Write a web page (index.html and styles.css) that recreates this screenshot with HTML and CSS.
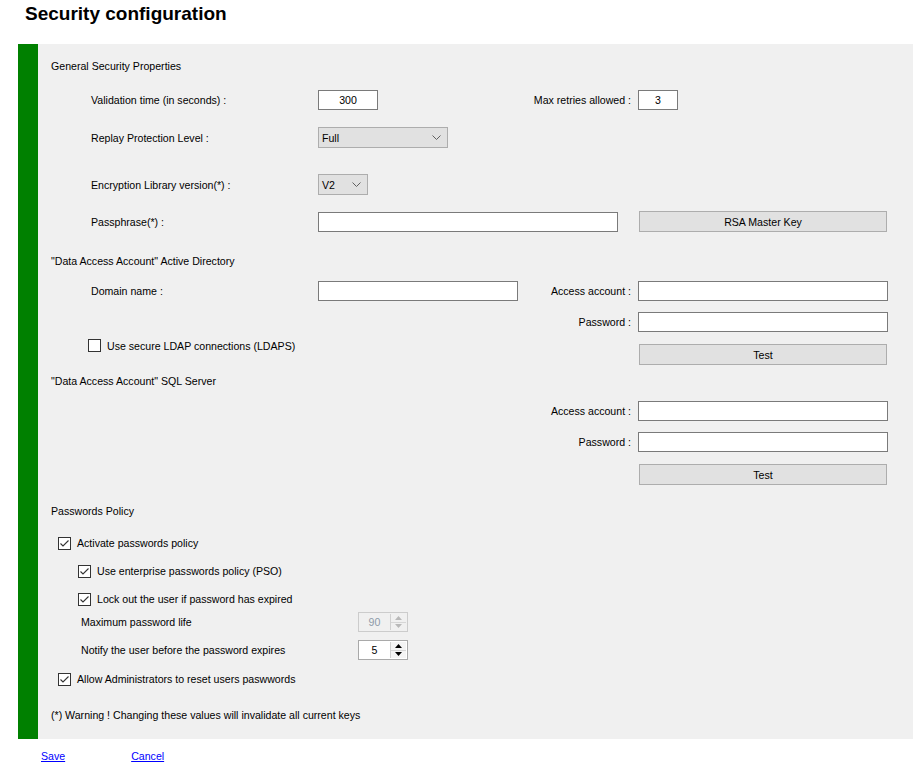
FILE: index.html
```html
<!DOCTYPE html>
<html lang="en">
<head>
<meta charset="utf-8">
<title>Security configuration</title>
<link rel="stylesheet" href="styles.css">
</head>
<body>
<h1 class="title">Security configuration</h1>
<div class="panel">
  <div class="section">General Security Properties</div>

  <div class="row r1">
    <span class="lbl">Validation time (in seconds) :</span>
    <input class="tb w60 center" value="300">
    <span class="rlbl">Max retries allowed :</span>
    <input class="tb w40 center right-field" value="3">
  </div>

  <div class="row r2 h21">
    <span class="lbl">Replay Protection Level :</span>
    <div class="combo w130"><span>Full</span><svg class="chev" width="9" height="5" viewBox="0 0 9 5"><polyline points="0.5,0.5 4.5,4.5 8.5,0.5" fill="none" stroke="#606060" stroke-width="1"/></svg></div>
  </div>

  <div class="row r3 h21">
    <span class="lbl">Encryption Library version(*) :</span>
    <div class="combo w50"><span>V2</span><svg class="chev" width="9" height="5" viewBox="0 0 9 5"><polyline points="0.5,0.5 4.5,4.5 8.5,0.5" fill="none" stroke="#606060" stroke-width="1"/></svg></div>
  </div>

  <div class="row r4 h21">
    <span class="lbl">Passphrase(*) :</span>
    <input class="tb w300 span2" value="">
    <button class="btn right-field">RSA Master Key</button>
  </div>

  <div class="section s2">"Data Access Account" Active Directory</div>

  <div class="row r5">
    <span class="lbl">Domain name :</span>
    <input class="tb w200" value="">
    <span class="rlbl">Access account :</span>
    <input class="tb w250 right-field" value="">
  </div>

  <div class="row r6">
    <span class="rlbl">Password :</span>
    <input class="tb w250 right-field" type="password" value="">
  </div>

  <div class="row r7">
    <label class="cb-item ldaps"><span class="cb"></span>Use secure LDAP connections (LDAPS)</label>
    <button class="btn right-field bottom">Test</button>
  </div>

  <div class="section s3">"Data Access Account" SQL Server</div>

  <div class="row r8">
    <span class="rlbl">Access account :</span>
    <input class="tb w250 right-field" value="">
  </div>

  <div class="row r9">
    <span class="rlbl">Password :</span>
    <input class="tb w250 right-field" type="password" value="">
  </div>

  <div class="row r10 h21">
    <button class="btn right-field">Test</button>
  </div>

  <div class="section s4">Passwords Policy</div>

  <div class="pol pol1 lvl1"><span class="cb checked"><svg width="11" height="11" viewBox="0 0 11 11"><polyline points="1.5,5.5 4,8 9.5,2.5" fill="none" stroke="#333" stroke-width="1.1"/></svg></span>Activate passwords policy</div>
  <div class="pol pol2 lvl2"><span class="cb checked"><svg width="11" height="11" viewBox="0 0 11 11"><polyline points="1.5,5.5 4,8 9.5,2.5" fill="none" stroke="#333" stroke-width="1.1"/></svg></span>Use enterprise passwords policy (PSO)</div>
  <div class="pol pol3 lvl2"><span class="cb checked"><svg width="11" height="11" viewBox="0 0 11 11"><polyline points="1.5,5.5 4,8 9.5,2.5" fill="none" stroke="#333" stroke-width="1.1"/></svg></span>Lock out the user if password has expired</div>

  <div class="pol spin-row sp1">
    <span class="spin-lbl">Maximum password life</span>
    <div class="spin disabled">
      <span class="spin-val">90</span>
      <span class="spin-btns">
        <span class="sb up"><svg width="7" height="4" viewBox="0 0 7 4"><polygon points="3.5,0 7,4 0,4" fill="#b8b8b8"/></svg></span>
        <span class="sb dn"><svg width="7" height="4" viewBox="0 0 7 4"><polygon points="0,0 7,0 3.5,4" fill="#b8b8b8"/></svg></span>
      </span>
    </div>
  </div>

  <div class="pol spin-row sp2">
    <span class="spin-lbl">Notify the user before the password expires</span>
    <div class="spin">
      <span class="spin-val">5</span>
      <span class="spin-btns">
        <span class="sb up"><svg width="7" height="4" viewBox="0 0 7 4"><polygon points="3.5,0 7,4 0,4" fill="#000"/></svg></span>
        <span class="sb dn"><svg width="7" height="4" viewBox="0 0 7 4"><polygon points="0,0 7,0 3.5,4" fill="#000"/></svg></span>
      </span>
    </div>
  </div>

  <div class="pol pol4 lvl1"><span class="cb checked"><svg width="11" height="11" viewBox="0 0 11 11"><polyline points="1.5,5.5 4,8 9.5,2.5" fill="none" stroke="#333" stroke-width="1.1"/></svg></span>Allow Administrators to reset users paswwords</div>

  <div class="section warn">(*) Warning ! Changing these values will invalidate all current keys</div>
</div>

<div class="links">
  <a href="#" class="link">Save</a>
  <a href="#" class="link cancel">Cancel</a>
</div>
</body>
</html>
```

FILE: styles.css
```css
html, body {
  margin: 0;
  padding: 0;
  background: #ffffff;
}

body {
  font-family: "Liberation Sans", Arial, sans-serif;
  font-size: 10.6px;
  color: #000;
}

.title {
  margin: 0 0 16px 25px;
  font-size: 19px;
  font-weight: bold;
  line-height: 28px;
  height: 28px;
  color: #000;
}

.panel {
  margin-left: 18px;
  border-left: 20px solid #008000;
  background: #f0f0f0;
  padding: 12px 0 14px 0;
}

.section {
  height: 20px;
  line-height: 20px;
  padding-left: 13px;
  white-space: nowrap;
}

.s2 { margin-top: 19px; }
.s3 { margin-top: 6px; }
.s4 { margin-top: 16px; }
.warn { margin-top: 16px; }

.row {
  display: grid;
  grid-template-columns: 227px 200px 113px 7px 250px;
  padding-left: 53px;
  height: 20px;
  align-items: center;
}

.row.h21 { height: 21px; }

.r1 { margin-top: 14px; }
.r2 { margin-top: 17px; }
.r3 { margin-top: 26px; }
.r4 { margin-top: 16px; }
.r5 { margin-top: 10px; }
.r6 { margin-top: 11px; }
.r7 { margin-top: 7px; height: 26px; align-items: start; }
.r8 { margin-top: 10px; }
.r9 { margin-top: 11px; }
.r10 { margin-top: 12px; }

.lbl {
  grid-column: 1;
  white-space: nowrap;
}

.rlbl {
  grid-column: 3;
  justify-self: end;
  white-space: nowrap;
}

.right-field {
  grid-column: 5;
}

.span2 {
  grid-column: 2 / 5;
}

.tb {
  box-sizing: border-box;
  height: 20px;
  border: 1px solid #7a7a7a;
  background: #fff;
  font: inherit;
  color: #000;
  padding: 0 3px;
  margin: 0;
  outline: none;
  justify-self: start;
}

.center { text-align: center; }

.w40 { width: 40px; }
.w50 { width: 50px; }
.w60 { width: 60px; }
.w130 { width: 130px; }
.w200 { width: 200px; }
.w250 { width: 250px; }
.w300 { width: 300px; }

.combo {
  box-sizing: border-box;
  height: 21px;
  border: 1px solid #adadad;
  background: #e1e1e1;
  display: flex;
  align-items: center;
  justify-content: space-between;
  padding: 0 6px 0 3px;
  justify-self: start;
}

.chev { display: block; }

.btn {
  box-sizing: border-box;
  width: 248px;
  height: 21px;
  margin: 0 0 0 1px;
  padding: 0;
  border: 1px solid #adadad;
  background: #e1e1e1;
  font: inherit;
  color: #000;
  justify-self: start;
}

.btn.bottom { align-self: end; }

.cb-item {
  grid-column: 1 / 3;
  display: flex;
  align-items: center;
  margin-left: -3px;
  height: 13px;
  white-space: nowrap;
}

.cb {
  box-sizing: border-box;
  width: 13px;
  height: 13px;
  border: 1px solid #333;
  background: #fff;
  margin-right: 6px;
  flex: none;
  display: flex;
  align-items: center;
  justify-content: center;
}

.cb svg { display: block; }

.pol {
  display: flex;
  align-items: center;
  height: 20px;
  white-space: nowrap;
}

.lvl1 { padding-left: 20px; }
.lvl2 { padding-left: 40px; }

.pol1 { margin-top: 12px; }
.pol2 { margin-top: 8px; }
.pol3 { margin-top: 8px; }
.sp1 { margin-top: 3px; }
.sp2 { margin-top: 8px; }
.pol4 { margin-top: 9px; }

.spin-row { padding-left: 43px; }

.spin-lbl {
  width: 277px;
}

.spin {
  box-sizing: border-box;
  width: 50px;
  height: 20px;
  border: 1px solid #a9a9a9;
  background: #fff;
  display: flex;
  align-items: stretch;
}

.spin.disabled {
  border-color: #cccccc;
  background: #f0f0f0;
}

.spin-val {
  flex: 1;
  text-align: center;
  line-height: 18px;
}

.spin.disabled .spin-val { color: #8d9aa8; }

.spin-btns {
  width: 15px;
  margin: 1px 1px 1px 0;
  display: flex;
  flex-direction: column;
  border-left: 1px solid #d0d0d0;
}

.sb {
  flex: 1;
  display: flex;
  align-items: center;
  justify-content: center;
  background: #f4f4f4;
}

.sb.up { border-bottom: 1px solid #d6d6d6; }

.spin.disabled .sb { background: #f0f0f0; }

.sb svg { display: block; }

.links {
  display: flex;
  height: 20px;
  line-height: 20px;
  margin-top: 7px;
  padding-left: 41px;
}

.link {
  color: #0000ff;
  text-decoration: underline;
}

.cancel { margin-left: 66px; }
```
